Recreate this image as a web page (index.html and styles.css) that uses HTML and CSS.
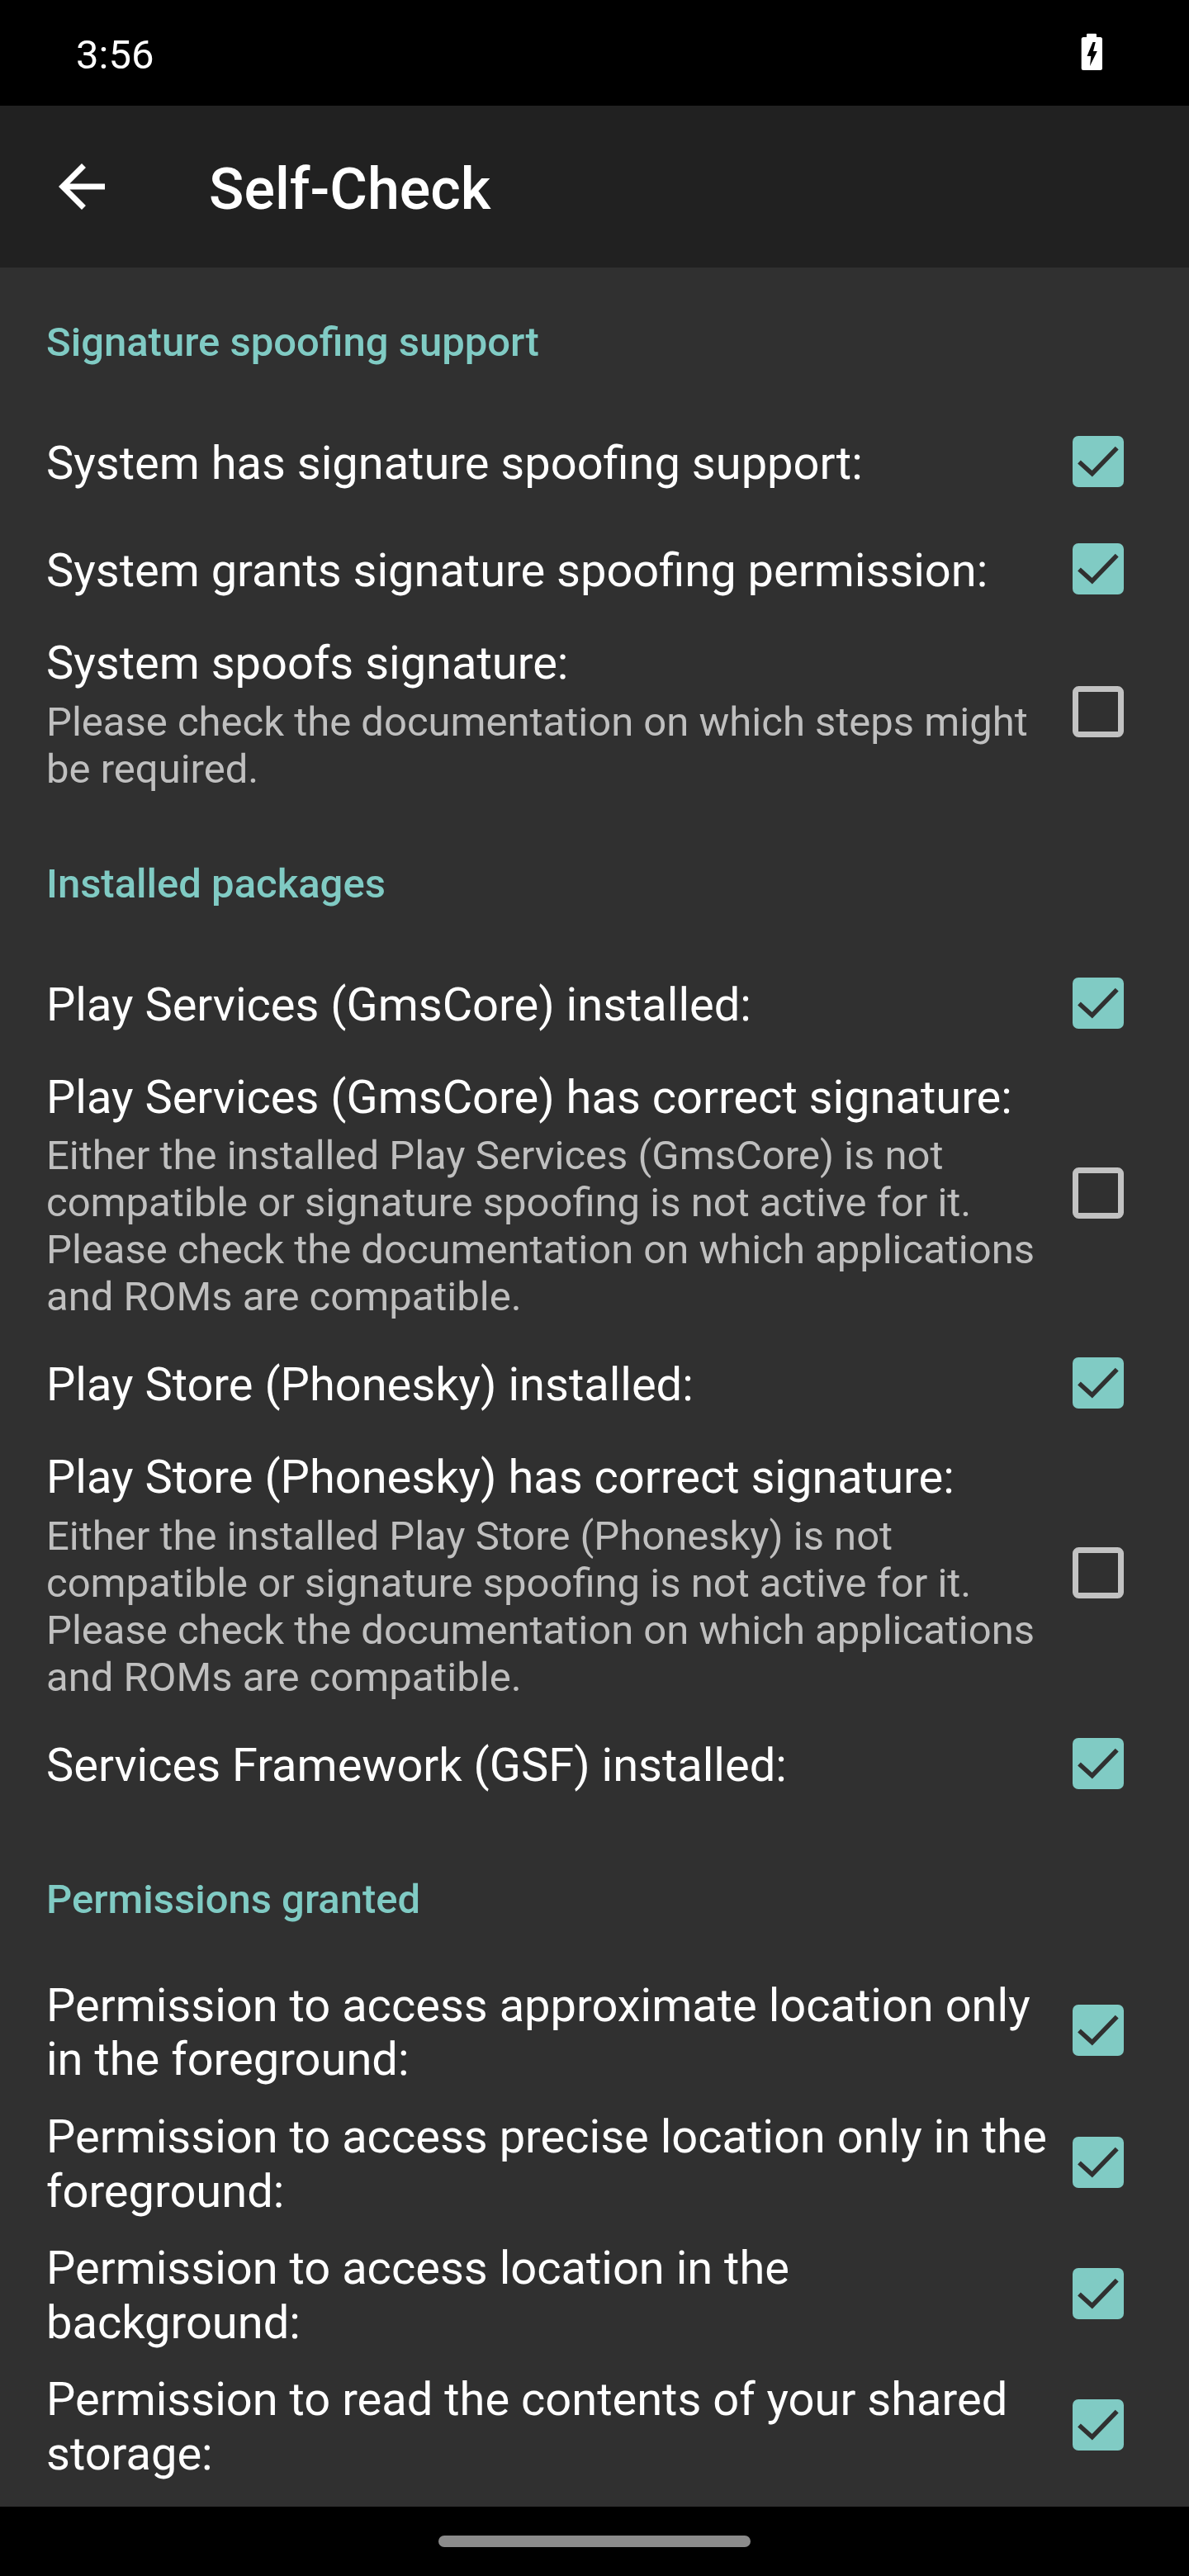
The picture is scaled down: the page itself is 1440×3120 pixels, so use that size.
FILE: index.html
```html
<!DOCTYPE html>
<html lang="en">
<head>
<meta charset="utf-8">
<title>Self-Check</title>
<link rel="stylesheet" href="styles.css">
</head>
<body>
<div class="screen">
  <div class="status-bar">
    <span class="time">3:56</span>
    <svg class="battery" width="28" height="46" viewBox="0 0 28 46">
      <rect x="7" y="0.7" width="12" height="5" rx="1" fill="#fff"/>
      <rect x="0.7" y="5" width="25.3" height="40" rx="2.5" fill="#fff"/>
      <path d="M14.5 11 L7.5 28 L12.3 28 L11 40 L19.8 22 L15 22 L17.8 11 Z" fill="#000"/>
    </svg>
  </div>

  <header class="app-bar">
    <svg class="back" width="84" height="84" viewBox="0 0 24 24">
      <path d="M20 11H7.830l5.59-5.59L12 4l-8 8 8 8 1.41-1.41L7.83 13H20v-2z" fill="#fff"/>
    </svg>
    <h1 class="title">Self-Check</h1>
  </header>

  <main class="content">
    <section class="group">
      <h2 class="category category-first">Signature spoofing support</h2>
      <div class="row">
        <div class="text"><div class="row-title">System has signature spoofing support:</div></div>
        <svg class="check" viewBox="0 0 62 62"><rect width="62" height="62" rx="7" class="box-on"/><path d="M8 31.5 L23.7 45.7 L53.7 14.7" class="tick"/></svg>
      </div>
      <div class="row">
        <div class="text"><div class="row-title">System grants signature spoofing permission:</div></div>
        <svg class="check" viewBox="0 0 62 62"><rect width="62" height="62" rx="7" class="box-on"/><path d="M8 31.5 L23.7 45.7 L53.7 14.7" class="tick"/></svg>
      </div>
      <div class="row">
        <div class="text">
          <div class="row-title">System spoofs signature:</div>
          <div class="summary">Please check the documentation on which steps might be required.</div>
        </div>
        <svg class="check" viewBox="0 0 62 62"><rect x="3.5" y="3.5" width="55" height="55" rx="4" class="box-off"/></svg>
      </div>
    </section>

    <section class="group">
      <h2 class="category">Installed packages</h2>
      <div class="row">
        <div class="text"><div class="row-title">Play Services (GmsCore) installed:</div></div>
        <svg class="check" viewBox="0 0 62 62"><rect width="62" height="62" rx="7" class="box-on"/><path d="M8 31.5 L23.7 45.7 L53.7 14.7" class="tick"/></svg>
      </div>
      <div class="row">
        <div class="text">
          <div class="row-title">Play Services (GmsCore) has correct signature:</div>
          <div class="summary">Either the installed Play Services (GmsCore) is not compatible or signature spoofing is not active for it. Please check the documentation on which applications and ROMs are compatible.</div>
        </div>
        <svg class="check" viewBox="0 0 62 62"><rect x="3.5" y="3.5" width="55" height="55" rx="4" class="box-off"/></svg>
      </div>
      <div class="row">
        <div class="text"><div class="row-title">Play Store (Phonesky) installed:</div></div>
        <svg class="check" viewBox="0 0 62 62"><rect width="62" height="62" rx="7" class="box-on"/><path d="M8 31.5 L23.7 45.7 L53.7 14.7" class="tick"/></svg>
      </div>
      <div class="row">
        <div class="text">
          <div class="row-title">Play Store (Phonesky) has correct signature:</div>
          <div class="summary">Either the installed Play Store (Phonesky) is not compatible or signature spoofing is not active for it. Please check the documentation on which applications and ROMs are compatible.</div>
        </div>
        <svg class="check" viewBox="0 0 62 62"><rect x="3.5" y="3.5" width="55" height="55" rx="4" class="box-off"/></svg>
      </div>
      <div class="row">
        <div class="text"><div class="row-title">Services Framework (GSF) installed:</div></div>
        <svg class="check" viewBox="0 0 62 62"><rect width="62" height="62" rx="7" class="box-on"/><path d="M8 31.5 L23.7 45.7 L53.7 14.7" class="tick"/></svg>
      </div>
    </section>

    <section class="group">
      <h2 class="category">Permissions granted</h2>
      <div class="row">
        <div class="text"><div class="row-title">Permission to access approximate location only in the foreground:</div></div>
        <svg class="check" viewBox="0 0 62 62"><rect width="62" height="62" rx="7" class="box-on"/><path d="M8 31.5 L23.7 45.7 L53.7 14.7" class="tick"/></svg>
      </div>
      <div class="row">
        <div class="text"><div class="row-title">Permission to access precise location only in the foreground:</div></div>
        <svg class="check" viewBox="0 0 62 62"><rect width="62" height="62" rx="7" class="box-on"/><path d="M8 31.5 L23.7 45.7 L53.7 14.7" class="tick"/></svg>
      </div>
      <div class="row">
        <div class="text"><div class="row-title">Permission to access location in the background:</div></div>
        <svg class="check" viewBox="0 0 62 62"><rect width="62" height="62" rx="7" class="box-on"/><path d="M8 31.5 L23.7 45.7 L53.7 14.7" class="tick"/></svg>
      </div>
      <div class="row">
        <div class="text"><div class="row-title">Permission to read the contents of your shared storage:</div></div>
        <svg class="check" viewBox="0 0 62 62"><rect width="62" height="62" rx="7" class="box-on"/><path d="M8 31.5 L23.7 45.7 L53.7 14.7" class="tick"/></svg>
      </div>
    </section>
  </main>

  <div class="nav-bar"><div class="handle"></div></div>
</div>
</body>
</html>
```

FILE: styles.css
```css
* { box-sizing: border-box; }

html, body {
  margin: 0;
  padding: 0;
  background: #000;
}

body {
  font-family: Roboto, "Noto Sans", "Liberation Sans", sans-serif;
  color: #fff;
}

.screen {
  width: 1440px;
  height: 3120px;
  display: flex;
  flex-direction: column;
  overflow: hidden;
}

/* Status bar */
.status-bar {
  height: 128px;
  flex: none;
  background: #000;
  display: flex;
  align-items: center;
  justify-content: space-between;
  padding: 0 103px 0 92px;
}

.time {
  font-size: 49px;
  line-height: 57px;
  padding-top: 4px;
  color: #fff;
}

.battery {
  display: block;
  margin-top: -2px;
}

/* App bar */
.app-bar {
  height: 196px;
  flex: none;
  background: #212121;
  display: flex;
  align-items: center;
  padding-left: 57px;
}

.back {
  display: block;
  flex: none;
}

.title {
  margin: 0 0 0 112px;
  padding-top: 5px;
  font-size: 70px;
  font-weight: 500;
  line-height: 82px;
  color: #fff;
}

/* Content */
.content {
  flex: none;
  height: 2712px;
  background: #303030;
  overflow: hidden;
}

.group {
  margin: 0;
}

.category {
  margin: 0;
  padding: 68px 79px 54px 56px;
  font-size: 49px;
  font-weight: 500;
  line-height: 57px;
  color: #80cbc4;
}

.category-first {
  padding-top: 62px;
}

.row {
  display: flex;
  align-items: center;
  min-height: 130px;
  padding: 14px 79px 14px 56px;
}

.text {
  flex: 1;
  min-width: 0;
}

.row-title {
  font-size: 56px;
  line-height: 65.6px;
  color: #fff;
}

.summary {
  margin-top: 9px;
  font-size: 49px;
  line-height: 57px;
  color: #bfbfbf;
}

.check {
  flex: none;
  width: 62px;
  height: 62px;
  margin: 0 0 6px 22px;
  display: block;
}

.box-on {
  fill: #80cbc4;
}

.tick {
  fill: none;
  stroke: #303030;
  stroke-width: 5.5;
}

.box-off {
  fill: none;
  stroke: #c2c2c2;
  stroke-width: 7;
}

/* Navigation bar */
.nav-bar {
  height: 84px;
  flex: none;
  background: #000;
  display: flex;
  align-items: center;
  justify-content: center;
}

.handle {
  width: 378px;
  height: 14px;
  border-radius: 7px;
  background: #8b8b8b;
}
```
